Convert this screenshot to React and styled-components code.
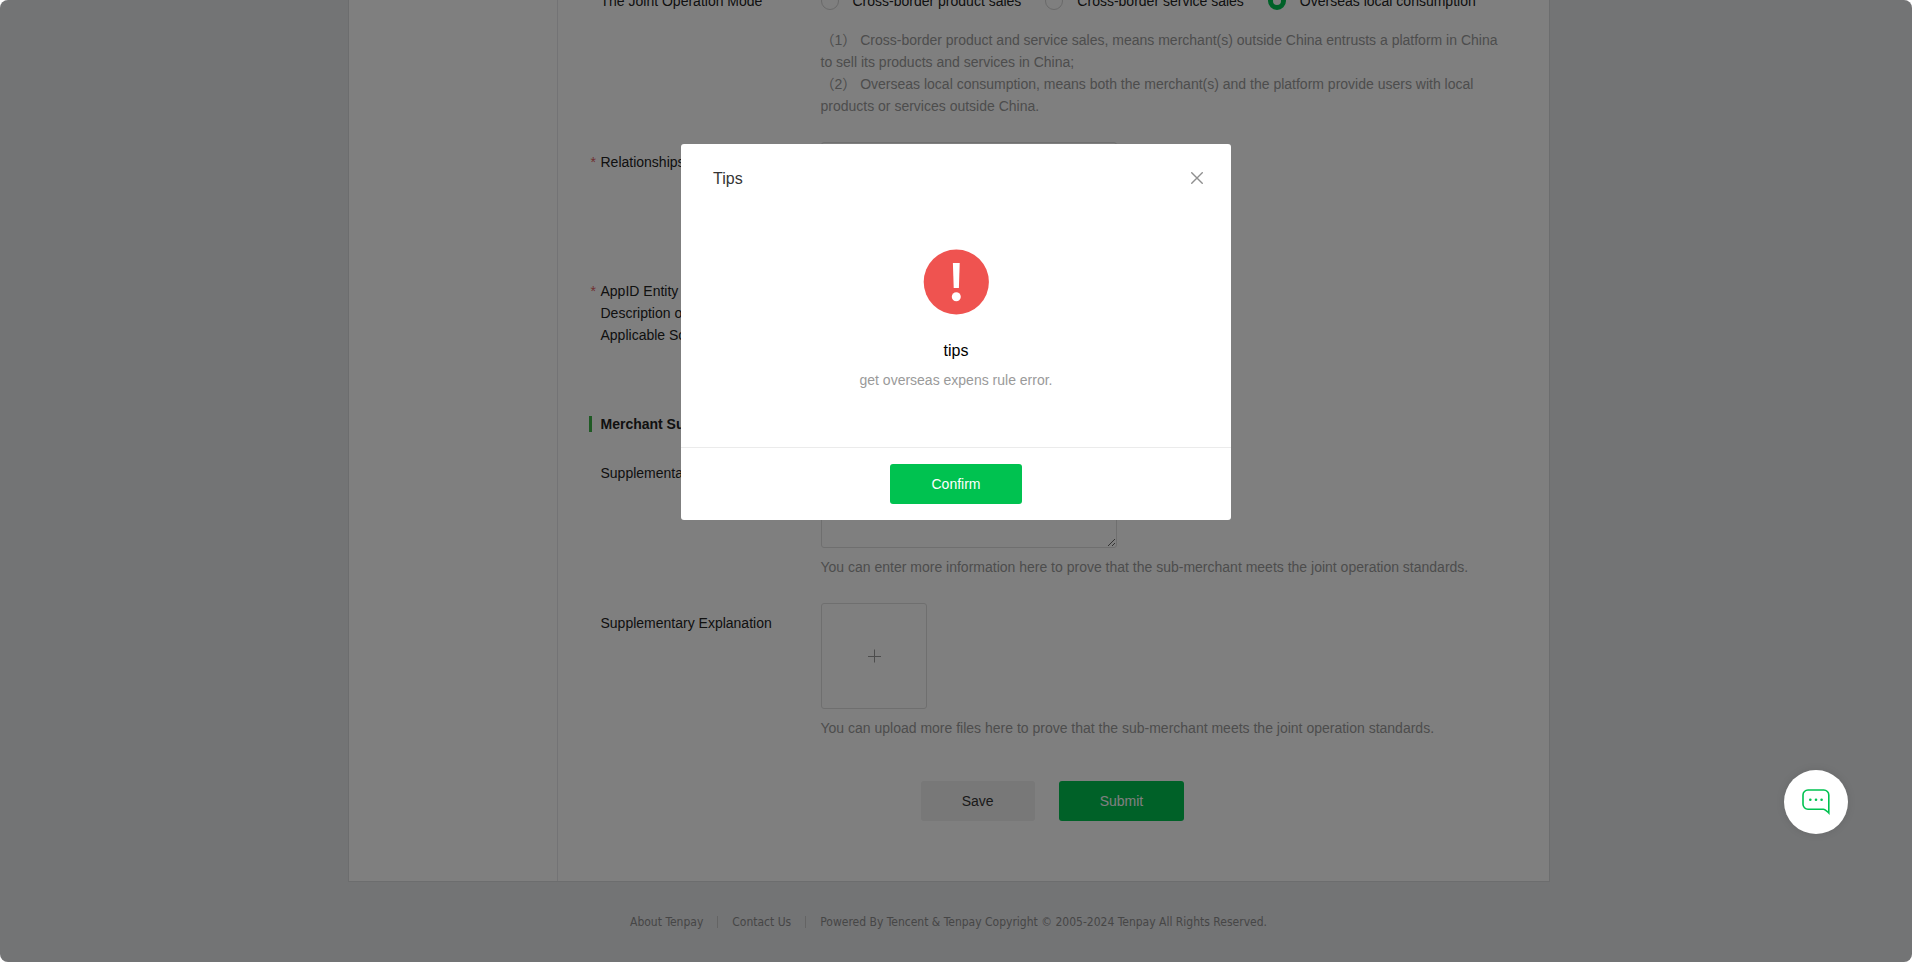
import React from "react";
import styled, { createGlobalStyle } from "styled-components";

const GlobalStyle = createGlobalStyle`
  * { box-sizing: border-box; }
  body {
    margin: 0;
    background: #fff;
    color: #222;
    font: 14px/22px "Liberation Sans", "Noto Sans CJK SC", sans-serif;
  }
  button, input, textarea { font: inherit; }
`;

const Page = styled.div`
  display: flex;
  flex-direction: column;
  align-items: center;
  min-height: 100vh;
  padding-right: 15px;
  overflow: hidden;
  background: #e7e8eb;
`;

const Card = styled.div`
  display: flex;
  width: 100%;
  max-width: 1202px;
  margin-top: -40px;
  background: #fff;
  border: 1px solid #d9dadc;
`;

const Sidebar = styled.aside`
  flex: 0 0 209px;
  border-right: 1px solid #e7e7eb;
`;

const Form = styled.form`
  flex: 1;
  min-width: 0;
  padding: 29px 40px 60px 43px;
`;

const Row = styled.div`
  display: grid;
  grid-template-columns: 220px minmax(0, 1fr);
  min-height: ${(p) => p.$minHeight || 0}px;
  margin-bottom: 25px;
`;

const Label = styled.label`
  position: relative;
  padding-top: ${(p) => (p.$flush ? 0 : 9)}px;

  &::before {
    content: "${(p) => (p.$required ? "*" : "")}";
    position: absolute;
    left: -10px;
    color: #e15f63;
  }
`;

const Line = styled.span`
  display: block;
`;

const RadioGroup = styled.div`
  display: flex;
  gap: 24px;
  margin-bottom: 17px;
`;

const RadioLabel = styled.label`
  display: flex;
  align-items: center;
  gap: 14px;
`;

const Radio = styled.input`
  appearance: none;
  width: 18px;
  height: 18px;
  margin: 0;
  border: 1px solid #d2d2d2;
  border-radius: 50%;
  background: #fff;

  &:checked {
    border: 5px solid #00c250;
  }
`;

const Help = styled.p`
  margin: 0;
  padding-top: ${(p) => (p.$spaced ? 8 : 0)}px;
  color: #9a9a9a;
`;

const TextInput = styled.input`
  display: block;
  width: 296px;
  height: 40px;
  padding: 8px 10px;
  border: 1px solid #dedede;
  border-radius: 3px;
`;

const TextArea = styled.textarea`
  display: block;
  width: 296px;
  height: 95px;
  padding: 8px 10px;
  border: 1px solid #dedede;
  border-radius: 3px;
  resize: both;
`;

const SectionTitle = styled.h2`
  margin: 0 0 21px -12px;
  padding-left: 9px;
  border-left: 3px solid #3eb549;
  font-size: 14px;
  line-height: 16px;
`;

const Upload = styled.button`
  display: grid;
  place-items: center;
  width: 106px;
  height: 106px;
  padding: 0;
  border: 1px solid #dedede;
  border-radius: 3px;
  background: #fff;
`;

const Actions = styled.div`
  display: flex;
  justify-content: center;
  gap: 24px;
  padding: 17px 4px 0 0;
`;

const Button = styled.button`
  height: 40px;
  padding: 0 41px;
  border: 0;
  border-radius: 3px;
  background: ${(p) => (p.$primary ? "#00c250" : "#f0f0f0")};
  color: ${(p) => (p.$primary ? "#fff" : "#353535")};
`;

const Footer = styled.footer`
  display: flex;
  align-items: center;
  padding: 29px 0;
  color: #8d8d8d;
  font-family: "DejaVu Sans Condensed", sans-serif;
  font-size: 12px;
`;

const FooterLink = styled.a`
  margin-right: 14px;
  padding-right: 14px;
  border-right: 1px solid #c9c9c9;
  color: inherit;
  line-height: 12px;
  text-decoration: none;
`;

const Overlay = styled.div`
  position: fixed;
  inset: 0;
  display: flex;
  align-items: flex-start;
  justify-content: center;
  padding-top: 144px;
  border-radius: 8px;
  background: rgba(0, 0, 0, 0.5);
  box-shadow: 0 0 0 8px #fff;
`;

const Dialog = styled.section`
  width: 550px;
  background: #fff;
  border-radius: 3px;
`;

const DialogHeader = styled.header`
  display: flex;
  align-items: flex-start;
  justify-content: space-between;
  padding: 24px 26px 22px 32px;
`;

const DialogTitle = styled.h1`
  margin: 0;
  color: #353535;
  font-size: 16px;
  font-weight: 400;
`;

const CloseButton = styled.button`
  display: grid;
  place-items: center;
  width: 16px;
  height: 20px;
  padding: 0;
  border: 0;
  background: none;
`;

const DialogBody = styled.div`
  display: flex;
  flex-direction: column;
  align-items: center;
  padding: 37px 32px 56px;
`;

const Message = styled.h2`
  margin: 25px 0 7px;
  color: #000;
  font-size: 16px;
  font-weight: 400;
`;

const DialogFooter = styled.footer`
  display: flex;
  justify-content: center;
  padding: 16px;
  border-top: 1px solid #ebebeb;
`;

const ChatButton = styled.button`
  position: fixed;
  right: 64px;
  bottom: 128px;
  display: grid;
  place-items: center;
  width: 64px;
  height: 64px;
  padding: 0;
  border: 0;
  border-radius: 50%;
  background: #fff;
  box-shadow: 0 0 8px rgba(0, 0, 0, 0.1);
`;

const MODES = [
  "Cross-border product sales",
  "Cross-border service sales",
  "Overseas local consumption",
];

function PlusIcon() {
  return (
    <svg width="14" height="14" viewBox="0 0 14 14" stroke="#9a9a9a" aria-hidden="true">
      <path d="M7.5 0.5v13M1 7.5h13" />
    </svg>
  );
}

function CloseIcon() {
  return (
    <svg width="12" height="12" viewBox="0 0 12 12" stroke="#8f8f8f" strokeWidth="1.4" aria-hidden="true">
      <path d="M0.3 0.3l11.4 11.4M11.7 0.3L0.3 11.7" />
    </svg>
  );
}

function AlertIcon() {
  return (
    <svg width="66" height="66" viewBox="0 0 66 66" aria-hidden="true">
      <circle cx="33.3" cy="33" r="32.6" fill="#ef5350" />
      <path d="M29.9 14h6.8l-0.8 25h-5.2z" fill="#fff" />
      <circle cx="33.3" cy="47.8" r="4.5" fill="#fff" />
    </svg>
  );
}

function ChatIcon() {
  return (
    <svg width="28" height="26" viewBox="0 0 28 26" aria-hidden="true">
      <path
        d="M26.8 24V6a5 5 0 0 0-5-5H6a5 5 0 0 0-5 5v9.2a5 5 0 0 0 5 5h15.5c1.6 0 2.4 1 5.3 3.8z"
        fill="none"
        stroke="#00c250"
        strokeWidth="1.6"
      />
      <g fill="#00c250">
        <circle cx="8.3" cy="10.7" r="1.3" />
        <circle cx="14" cy="10.7" r="1.3" />
        <circle cx="19.6" cy="10.7" r="1.3" />
      </g>
    </svg>
  );
}

export default function App() {
  return (
    <>
      <GlobalStyle />
      <Page>
        <Card>
          <Sidebar />
          <Form onSubmit={(e) => e.preventDefault()}>
            <Row>
              <Label as="span" $flush id="mode-label">The Joint Operation Mode</Label>
              <div>
                <RadioGroup role="radiogroup" aria-labelledby="mode-label">
                  {MODES.map((mode, i) => (
                    <RadioLabel key={mode}>
                      <Radio type="radio" name="mode" defaultChecked={i === 2} />
                      {mode}
                    </RadioLabel>
                  ))}
                </RadioGroup>
                <Help>
                  （1） Cross-border product and service sales, means merchant(s) outside China
                  entrusts a platform in China to sell its products and services in China;
                </Help>
                <Help>
                  （2） Overseas local consumption, means both the merchant(s) and the platform
                  provide users with local products or services outside China.
                </Help>
              </div>
            </Row>
            <Row $minHeight={104}>
              <Label $required htmlFor="relationships">Relationships</Label>
              <TextInput id="relationships" />
            </Row>
            <Row $minHeight={120}>
              <Label $required htmlFor="scenarios">
                <Line>AppID Entity</Line>
                <Line>Description of</Line>
                <Line>Applicable Scenarios</Line>
              </Label>
              <TextArea id="scenarios" />
            </Row>
            <SectionTitle>Merchant Supplementary</SectionTitle>
            <Row>
              <Label htmlFor="supplement">Supplementary</Label>
              <div>
                <TextArea id="supplement" />
                <Help $spaced>
                  You can enter more information here to prove that the sub-merchant meets the
                  joint operation standards.
                </Help>
              </div>
            </Row>
            <Row>
              <Label htmlFor="files">Supplementary Explanation</Label>
              <div>
                <Upload id="files" type="button"><PlusIcon /></Upload>
                <Help $spaced>
                  You can upload more files here to prove that the sub-merchant meets the joint
                  operation standards.
                </Help>
              </div>
            </Row>
            <Actions>
              <Button type="button">Save</Button>
              <Button type="submit" $primary>Submit</Button>
            </Actions>
          </Form>
        </Card>
        <Footer>
          <FooterLink href="#about">About Tenpay</FooterLink>
          <FooterLink href="#contact">Contact Us</FooterLink>
          <span>Powered By Tencent &amp; Tenpay Copyright © 2005-2024 Tenpay All Rights Reserved.</span>
        </Footer>
      </Page>
      <Overlay>
        <Dialog role="dialog" aria-modal="true" aria-labelledby="dialog-title">
          <DialogHeader>
            <DialogTitle id="dialog-title">Tips</DialogTitle>
            <CloseButton type="button" aria-label="Close"><CloseIcon /></CloseButton>
          </DialogHeader>
          <DialogBody>
            <AlertIcon />
            <Message>tips</Message>
            <Help>get overseas expens rule error.</Help>
          </DialogBody>
          <DialogFooter>
            <Button type="button" $primary>Confirm</Button>
          </DialogFooter>
        </Dialog>
      </Overlay>
      <ChatButton type="button" aria-label="Chat"><ChatIcon /></ChatButton>
    </>
  );
}
